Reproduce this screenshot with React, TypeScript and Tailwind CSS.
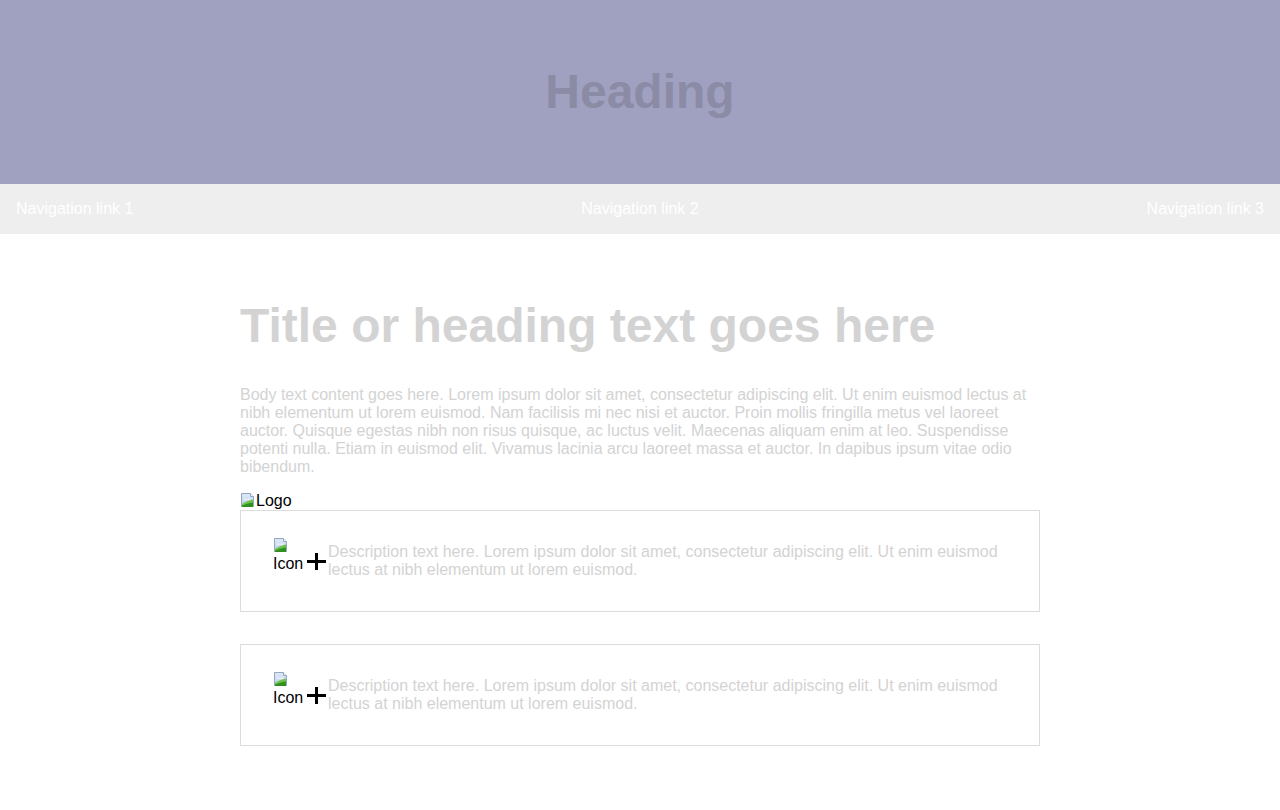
import React from "react";

const descText =
  "Description text here. Lorem ipsum dolor sit amet, consectetur adipiscing elit. Ut enim euismod lectus at nibh elementum ut lorem euismod.";

function BrokenImage() {
  return (
    <svg width="16" height="16" viewBox="0 0 16 16" className="inline-block align-[-2px]">
      <defs>
        <linearGradient id="sky" x1="0" y1="0" x2="0" y2="1">
          <stop offset="0" stopColor="#dfe9f6" />
          <stop offset="1" stopColor="#b9cfea" />
        </linearGradient>
      </defs>
      <path d="M1.5 1.5h9l3 3v10h-12z" fill="url(#sky)" stroke="#93a6c0" />
      <path d="M10.5 1.5v3h3" fill="#ffffff" stroke="#93a6c0" />
      <path d="M3 7.5c1.5-1.5 3-1.2 4-0.3 1.3-1.2 2.8-0.8 3.6 0.3z" fill="#ffffff" />
      <path d="M2 15v-3c3-2.3 7-3.6 11-4.6V15z" fill="#6cc24a" />
      <path d="M2 15v-1.2c3-1.6 7-2.8 11-3.4V15z" fill="#2f8f1f" />
    </svg>
  );
}

function PlusIcon() {
  return (
    <svg width="19" height="17" viewBox="0 0 19 17" className="shrink-0 ml-1 mr-[2px]">
      <path d="M0 8.5h19M9.5 0v17" stroke="#000" strokeWidth="3" />
    </svg>
  );
}

function Card({ last }: { last?: boolean }) {
  return (
    <div className={`border border-[#dcdcdc] p-8 ${last ? "" : "mb-8"}`}>
      <div className="flex items-center">
        <div className="w-[30px] shrink-0 self-start -mt-[6px] text-black leading-[18px]">
          <BrokenImage />
          <div>Icon</div>
        </div>
        <PlusIcon />
        <p className="text-[#d3d3d3] leading-[18px]">{descText}</p>
      </div>
    </div>
  );
}

export default function App() {
  return (
    <div className="min-h-[810px] bg-white font-['Liberation_Sans',Arial,sans-serif] text-base leading-[1.15]">
      <header className="bg-[#a0a0c0] py-16 text-center">
        <h1 className="text-[48px] leading-[56px] font-bold text-[#8b8ba6]">Heading</h1>
      </header>
      <nav className="bg-[#eeeeee] h-[50px] px-4 flex items-center justify-between text-white">
        <a>Navigation link 1</a>
        <a>Navigation link 2</a>
        <a>Navigation link 3</a>
      </nav>
      <main className="w-[800px] mx-auto pt-16 pb-16">
        <h2 className="text-[48px] leading-[56px] font-bold text-[#d3d3d3] mb-8">
          Title or heading text goes here
        </h2>
        <p className="text-[#d3d3d3] leading-[18px] mb-4">
          Body text content goes here. Lorem ipsum dolor sit amet, consectetur adipiscing elit. Ut enim
          euismod lectus at nibh elementum ut lorem euismod. Nam facilisis mi nec nisi et auctor. Proin
          mollis fringilla metus vel laoreet auctor. Quisque egestas nibh non risus quisque, ac luctus
          velit. Maecenas aliquam enim at leo. Suspendisse potenti nulla. Etiam in euismod elit. Vivamus
          lacinia arcu laoreet massa et auctor. In dapibus ipsum vitae odio bibendum.
        </p>
        <div className="text-black leading-[18px]">
          <BrokenImage />
          <span>Logo</span>
        </div>
        <Card />
        <Card last />
      </main>
    </div>
  );
}
